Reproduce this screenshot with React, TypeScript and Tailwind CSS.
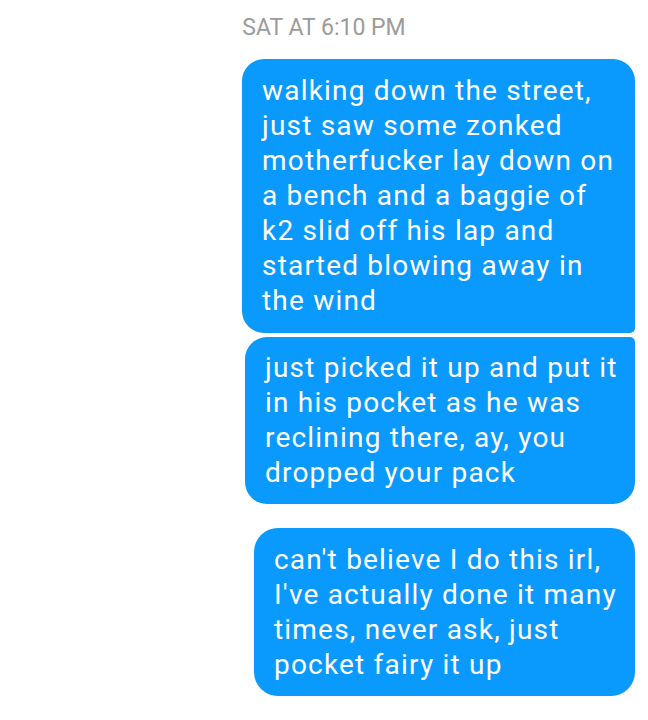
const messages = [
  {
    lines: [
      'walking down the street,',
      'just saw some zonked',
      'motherfucker lay down on',
      'a bench and a baggie of',
      'k2 slid off his lap and',
      'started blowing away in',
      'the wind',
    ],
    box: 'w-[393px] rounded-[22px] rounded-br-[5px] pt-[14px] pb-[15px]',
  },
  {
    lines: [
      'just picked it up and put it',
      'in his pocket as he was',
      'reclining there, ay, you',
      'dropped your pack',
    ],
    box: 'w-[390px] rounded-[22px] rounded-tr-[5px] mt-[4px] pt-[13px] pb-[14px]',
  },
  {
    lines: [
      "can't believe I do this irl,",
      "I've actually done it many",
      'times, never ask, just',
      'pocket fairy it up',
    ],
    box: 'w-[381px] rounded-[24px] mt-[24px] pt-[14px] pb-[14px]',
  },
]

export default function App() {
  return (
    <div className="w-[648px] h-[720px] bg-white font-['Roboto','Liberation_Sans',sans-serif] overflow-hidden">
      <div className="pt-[14px] text-center text-[23px] leading-[28px] text-[#9b9b9b]">SAT AT 6:10 PM</div>
      <div className="flex flex-col items-end pr-[13px] mt-[17px]">
        {messages.map((m, i) => (
          <div key={i} className={`${m.box} bg-[#0a99fc] text-white text-[28px] leading-[35px] tracking-[1.2px] pl-[20px]`}>
            {m.lines.map((l, j) => (
              <div key={j} className="whitespace-nowrap">{l}</div>
            ))}
          </div>
        ))}
      </div>
    </div>
  )
}
